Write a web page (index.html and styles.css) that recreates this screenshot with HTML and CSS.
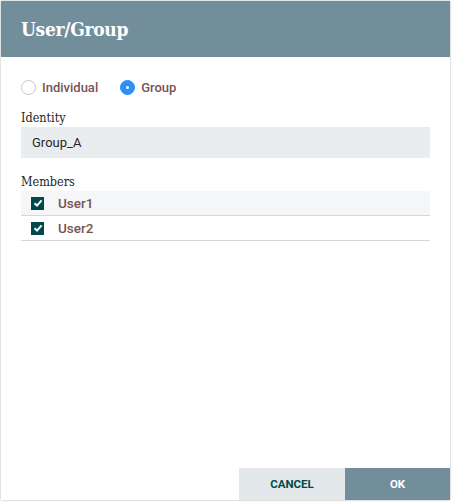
FILE: index.html
```html
<!DOCTYPE html>
<html>
<head>
<meta charset="utf-8">
<link rel="stylesheet" href="styles.css">
</head>
<body>
<div class="dialog">
  <div class="header"><span class="title">User/Group</span></div>
  <div class="content">
    <div class="radios">
      <label class="radio"><span class="circle"></span><span class="rlabel">Individual</span></label>
      <label class="radio"><span class="circle on"></span><span class="rlabel">Group</span></label>
    </div>
    <div class="field-label">Identity</div>
    <div class="input">Group_A</div>
    <div class="field-label members">Members</div>
    <div class="list">
      <div class="row first">
        <span class="check"><svg width="10" height="10" viewBox="0 0 10 10"><path d="M1.5 5.2 L4 7.6 L8.6 2.4" fill="none" stroke="#fff" stroke-width="2"/></svg></span>
        <span class="user">User1</span>
      </div>
      <div class="row">
        <span class="check"><svg width="10" height="10" viewBox="0 0 10 10"><path d="M1.5 5.2 L4 7.6 L8.6 2.4" fill="none" stroke="#fff" stroke-width="2"/></svg></span>
        <span class="user">User2</span>
      </div>
    </div>
  </div>
  <div class="footer">
    <div class="btn cancel">CANCEL</div>
    <div class="btn ok">OK</div>
  </div>
</div>
</body>
</html>
```
FILE: styles.css
```css
html, body { margin: 0; padding: 0; background: #fff; }
body { width: 452px; height: 502px; overflow: hidden; }
.dialog {
  margin: 1px 0 0 1px;
  width: 449px;
  height: 499px;
  display: flex;
  flex-direction: column;
  background: #fff;
  box-shadow: 0 0 2px rgba(0,0,0,0.35);
}
.header {
  height: 56px;
  background: #728e9b;
  display: flex;
  align-items: center;
  padding-left: 20px;
  flex: none;
}
.title {
  color: #fff;
  font-family: "DejaVu Serif Condensed", "DejaVu Serif", serif;
  font-stretch: condensed;
  font-weight: bold;
  font-size: 19px;
  letter-spacing: -0.3px;
}
.content {
  padding: 20px 20px 0 20px;
  font-family: Roboto, "Liberation Sans", sans-serif;
}
.radios {
  display: flex;
  align-items: center;
  height: 20px;
  gap: 22px;
}
.radio { display: flex; align-items: center; gap: 6px; }
.circle {
  border: 1px solid #c6c6c6;
  border-radius: 50%;
  box-sizing: border-box;
  width: 15px; height: 15px;
  background: #fff;
  position: relative;
}
.circle.on {
  background: #2e8ff5;
  border-color: #2e8ff5;
}
.circle.on::after {
  content: "";
  position: absolute;
  left: 5px; top: 5px;
  width: 3px; height: 3px;
  border-radius: 50%;
  background: #fff;
}
.rlabel {
  color: #775351;
  font-weight: 500;
  font-size: 13px;
}
.field-label {
  margin-top: 12px;
  font-family: "DejaVu Serif Condensed", "DejaVu Serif", serif;
  font-stretch: condensed;
  font-size: 12.5px;
  color: #262626;
  height: 18px;
  line-height: 18px;
}
.field-label.members { margin-top: 15px; }
.input {
  margin-top: 0;
  height: 31px;
  background: #e9edef;
  padding-left: 11px;
  display: flex;
  align-items: center;
  font-size: 13px;
  color: #262626;
}
.list { margin-top: 0; }
.row {
  height: 24px;
  border-bottom: 1px solid #cfd8dc;
  display: flex;
  align-items: center;
  padding-left: 10px;
}
.row.first { background: #f4f6f7; }
.check {
  width: 13px; height: 13px;
  background: #004849;
  display: flex;
  align-items: center;
  justify-content: center;
  margin-right: 14px;
}
.user {
  color: #775351;
  font-weight: 500;
  font-size: 13.5px;
}
.footer {
  margin-top: auto;
  display: flex;
  justify-content: flex-end;
  font-family: Roboto, "Liberation Sans", sans-serif;
}
.btn {
  width: 105px;
  height: 32px;
  display: flex;
  align-items: center;
  justify-content: center;
  font-size: 11.5px;
  font-weight: bold;
}
.cancel { background: #e3e8eb; color: #004849; width: 106px; }
.ok { background: #728e9b; color: #fff; }
```
